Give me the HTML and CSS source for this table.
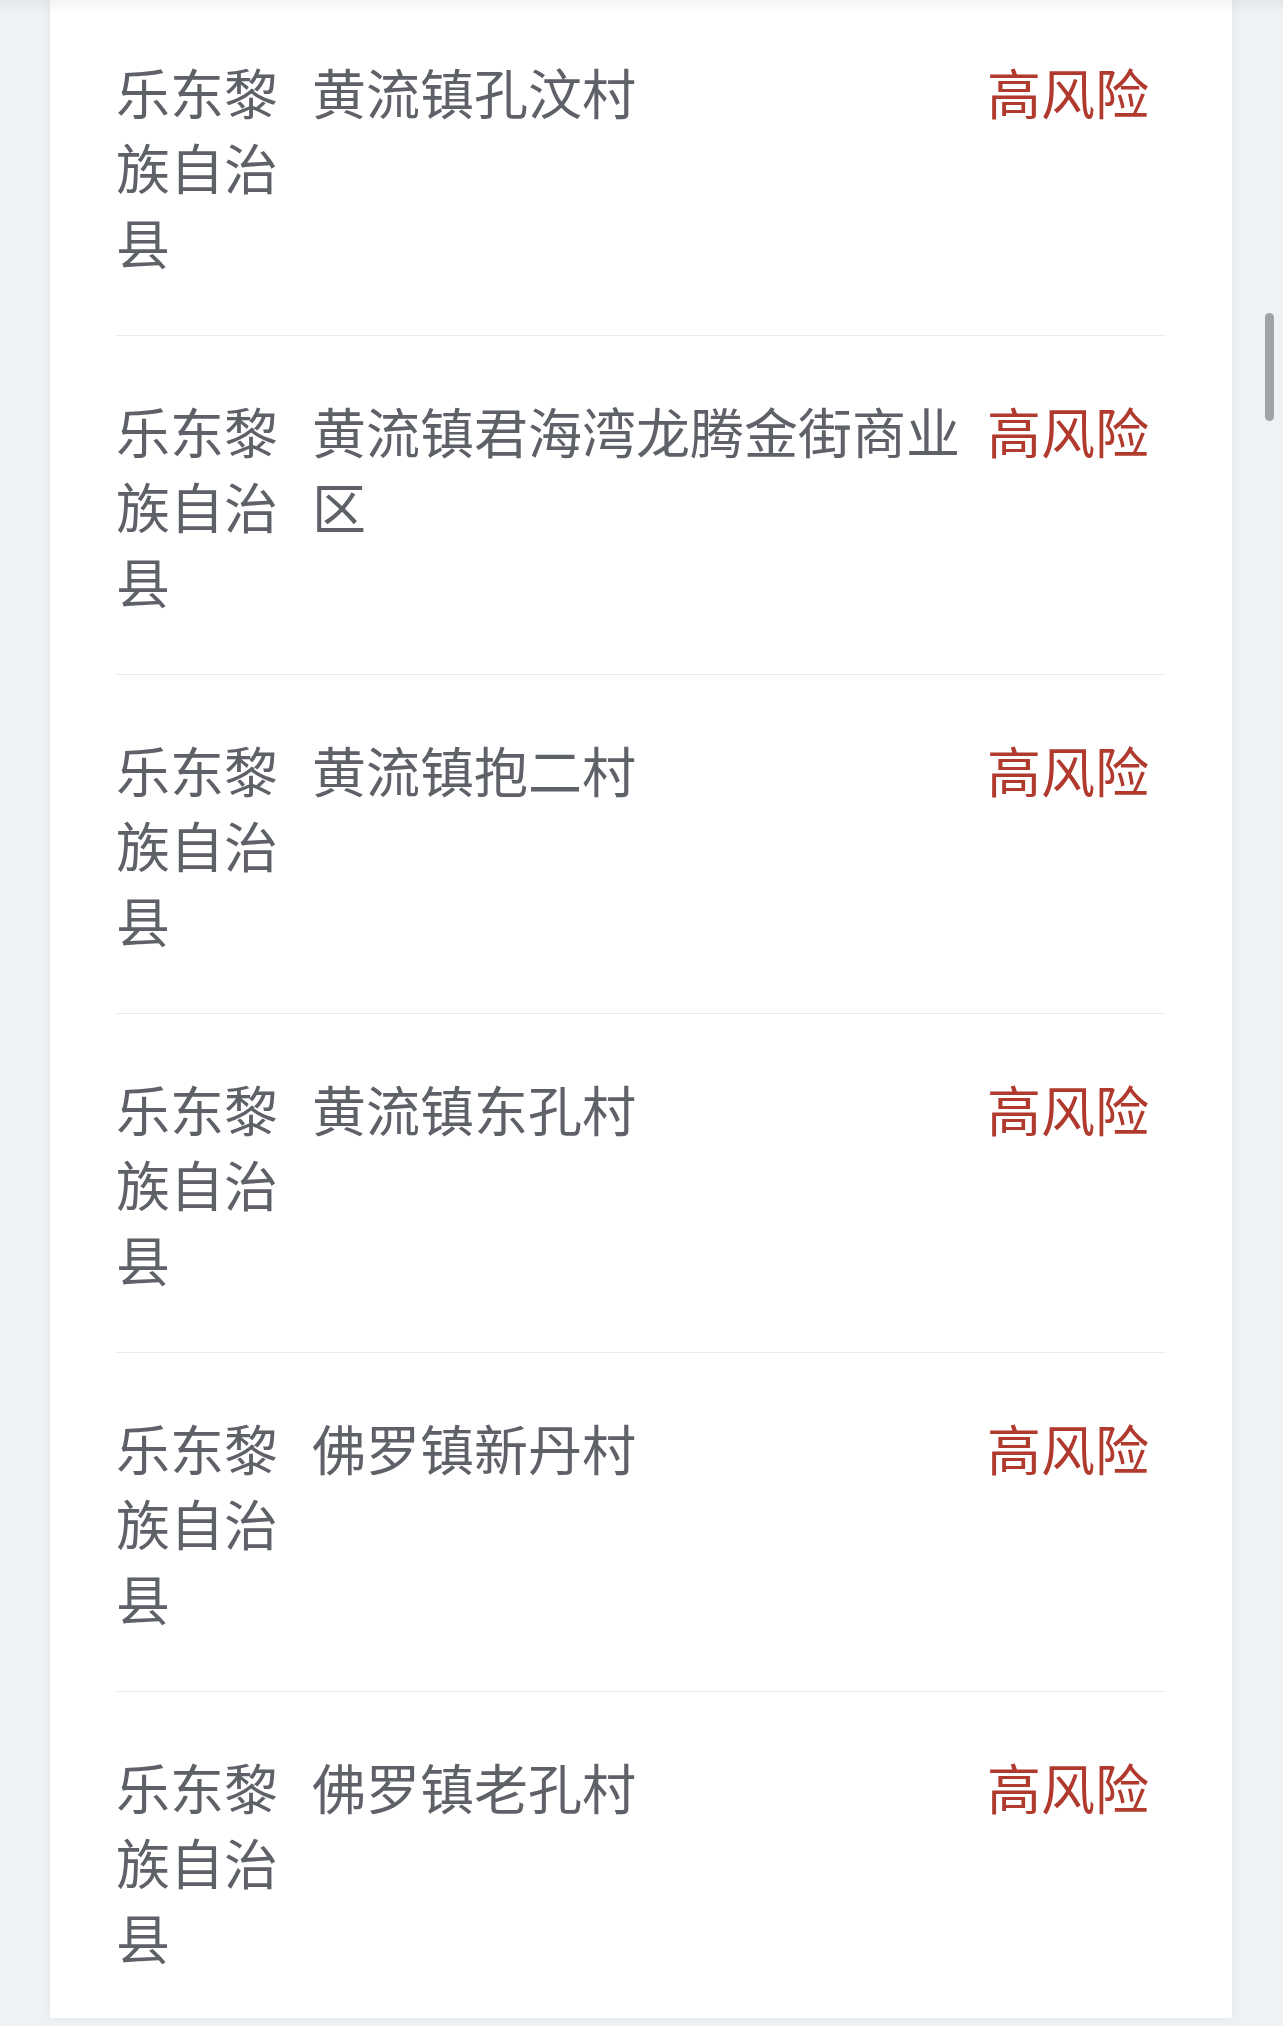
FILE: index.html
```html
<!DOCTYPE html>
<html lang="zh-CN">
<head>
<meta charset="utf-8">
<title>风险地区</title>
<link rel="stylesheet" href="styles.css">
</head>
<body>
<div class="top-shade"></div>
<main class="page">
  <section class="card">
    <div class="row">
      <div class="cell county">乐东黎族自治县</div>
      <div class="cell place">黄流镇孔汶村</div>
      <div class="cell level">高风险</div>
    </div>
    <div class="row">
      <div class="cell county">乐东黎族自治县</div>
      <div class="cell place">黄流镇君海湾龙腾金街商业区</div>
      <div class="cell level">高风险</div>
    </div>
    <div class="row">
      <div class="cell county">乐东黎族自治县</div>
      <div class="cell place">黄流镇抱二村</div>
      <div class="cell level">高风险</div>
    </div>
    <div class="row">
      <div class="cell county">乐东黎族自治县</div>
      <div class="cell place">黄流镇东孔村</div>
      <div class="cell level">高风险</div>
    </div>
    <div class="row">
      <div class="cell county">乐东黎族自治县</div>
      <div class="cell place">佛罗镇新丹村</div>
      <div class="cell level">高风险</div>
    </div>
    <div class="row last">
      <div class="cell county">乐东黎族自治县</div>
      <div class="cell place">佛罗镇老孔村</div>
      <div class="cell level">高风险</div>
    </div>
  </section>
</main>
<div class="scroll-thumb"></div>
</body>
</html>
```
FILE: styles.css
```css
html, body {
  margin: 0;
  padding: 0;
}
body {
  background: #eef2f5;
  font-family: "Noto Sans CJK SC", "Noto Sans", sans-serif;
  height: 2026px;
  overflow: hidden;
}
.page {
  padding: 0 51px 0 50px;
}
.card {
  background: #ffffff;
  margin-top: -3px;
  padding: 0 66px;
  box-shadow: 0 0 10px rgba(0, 0, 0, 0.05);
}
.row {
  display: grid;
  grid-template-columns: 196px 675px auto;
  padding: 57px 0 56px;
  border-bottom: 1px solid #e9ebef;
  font-size: 54px;
  line-height: 75px;
}
.row.last {
  border-bottom: none;
  padding-bottom: 44px;
}
.cell {
  color: #5f6169;
  word-break: break-all;
}
.county {
  padding-right: 32px;
}
.place {
  padding-right: 20px;
}
.level {
  color: #b13a2f;
  white-space: nowrap;
}
.top-shade {
  position: fixed;
  top: 0;
  left: 0;
  right: 0;
  height: 14px;
  background: linear-gradient(rgba(0, 0, 0, 0.045), rgba(0, 0, 0, 0));
  z-index: 2;
}
.scroll-thumb {
  position: fixed;
  left: 1265px;
  top: 313px;
  width: 9px;
  height: 108px;
  border-radius: 5px;
  background: #a1a2a4;
  z-index: 3;
}
```
